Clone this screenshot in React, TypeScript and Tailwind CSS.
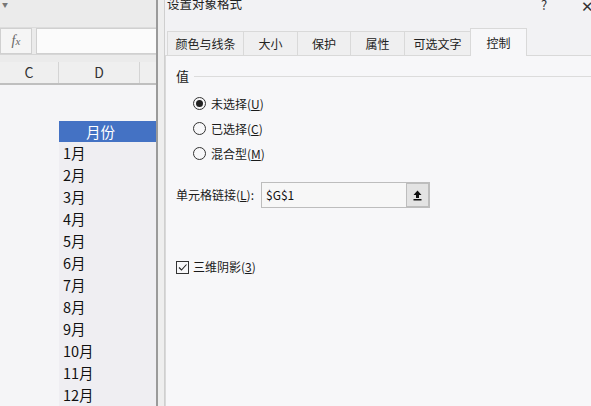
import React from "react";

const months = ["1月", "2月", "3月", "4月", "5月", "6月", "7月", "8月", "9月", "10月", "11月", "12月"];
const tabs = [
  { label: "颜色与线条", w: "w-[76px]" },
  { label: "大小", w: "w-[54px]" },
  { label: "保护", w: "w-[53px]" },
  { label: "属性", w: "w-[54px]" },
  { label: "可选文字", w: "w-[66px]" },
];

const font = { fontFamily: '"Noto Sans CJK SC", "Liberation Sans", sans-serif' };

function Radio({ checked, label, hot }: { checked?: boolean; label: string; hot: string }) {
  return (
    <div className="flex items-center h-[25px] pl-[17px]">
      <span className="w-[13px] h-[13px] rounded-full border border-[#333] flex items-center justify-center bg-[#f7f7f9]">
        {checked && <span className="w-[7px] h-[7px] rounded-full bg-[#222]" />}
      </span>
      <span className="ml-[5px] text-[12px] text-[#1a1a1a]">
        {label}(<span className="underline">{hot}</span>)
      </span>
    </div>
  );
}

function Sheet() {
  return (
    <div className="w-[156px] h-full flex flex-col bg-[#f5f5f7] shrink-0">
      <div className="h-[28px] bg-[#ebebeb] relative border-b border-[#dcdcdc]">
        <span className="absolute left-[2px] top-0 text-[6px] text-[#777]">▼</span>
      </div>
      <div className="h-[28px] flex items-center bg-[#ebebeb] border-b border-[#d6d6d6]">
        <div className="w-[32px] h-[26px] bg-[#f5f5f5] border border-[#d0d0d0] flex items-center justify-center">
          <span className="text-[14px] italic text-[#666]" style={{ fontFamily: '"Liberation Serif", serif' }}>
            f<span className="text-[11px]">x</span>
          </span>
        </div>
        <div className="ml-[4px] flex-1 h-[26px] bg-[#fbfbfb] border border-[#d0d0d0] border-r-0" />
      </div>
      <div className="h-[7px] bg-[#ebebeb]" />
      <div className="h-[23px] flex bg-[#efefef] border-b-2 border-[#bfbfbf] text-[14px] text-[#333]">
        <div className="w-[59px] border-r border-[#d4d4d4] flex items-center justify-center">C</div>
        <div className="w-[81px] border-r border-[#d4d4d4] flex items-center justify-center">D</div>
        <div className="flex-1" />
      </div>
      <div className="flex-1 flex">
        <div className="w-[59px]" />
        <div className="flex-1 flex flex-col pt-[36px]">
          <div className="h-[21px] bg-[#4472c4] text-white text-[14.5px] flex items-center justify-center pr-[14px]">月份</div>
          <div className="flex-1 bg-[#efeef2] flex flex-col">
            {months.map((m) => (
              <div key={m} className="h-[22px] flex items-center pl-[4px] text-[14.5px] text-[#111]">
                {m}
              </div>
            ))}
          </div>
        </div>
      </div>
    </div>
  );
}

function Dialog() {
  return (
    <div className="flex-1 h-full flex bg-[#f2f2f4]">
      <div className="w-[2px] bg-[#9a9a9a]" />
      <div className="w-[7px] bg-[#eeeeee] border-r border-[#cfcfcf]" />
      <div className="flex-1 flex flex-col">
        <div className="h-[28px] relative">
          <span className="absolute left-[2px] top-[-5px] text-[12.5px] text-[#222]">设置对象格式</span>
          <span className="absolute left-[376px] top-[-5px] text-[13px] text-[#333]">?</span>
          <span className="absolute left-[416px] top-[-5px] text-[15px] text-[#333]">✕</span>
        </div>
        <div className="h-[27px] flex items-end pl-[2px]">
          {tabs.map((t) => (
            <div
              key={t.label}
              className={`${t.w} h-[24px] border-l border-t border-[#d9d9d9] bg-[#efeff0] flex items-center justify-center text-[12px] text-[#222]`}
            >
              {t.label}
            </div>
          ))}
          <div className="w-[57px] h-[28px] border border-b-0 border-[#d9d9d9] bg-[#f7f7f9] flex items-center justify-center text-[12px] text-[#222] relative z-10 -mb-px">
            控制
          </div>
        </div>
        <div className="flex-1 bg-[#f7f7f9] border-t border-l border-[#d9d9d9] pl-[10px] pt-[10px]">
          <div className="flex items-center h-[20px]">
            <span className="text-[13px] text-[#1a1a1a]">值</span>
            <div className="ml-[5px] flex-1 h-px bg-[#dcdcdc]" />
          </div>
          <div className="pt-[5px] flex flex-col">
            <Radio checked label="未选择" hot="U" />
            <Radio label="已选择" hot="C" />
            <Radio label="混合型" hot="M" />
          </div>
          <div className="mt-[16px] flex items-center h-[26px]">
            <span className="w-[85px] text-[12px] text-[#1a1a1a]">
              单元格链接(<span className="underline">L</span>):
            </span>
            <div className="w-[146px] h-[26px] bg-[#f7f7f7] border border-[#bdbdbd] flex items-center pl-[4px] text-[12px] text-[#111]">
              $G$1
            </div>
            <div className="w-[23px] h-[26px] bg-[#e3e3e3] border-2 border-[#bdbdbd] border-l-0 flex items-center justify-center">
              <svg width="9" height="11" viewBox="0 0 9 11">
                <path d="M4.5 0.5 L8.5 5 L6 5 L6 8 L3 8 L3 5 L0.5 5 Z" fill="#111" />
                <rect x="0.5" y="9" width="8" height="1.5" fill="#111" />
              </svg>
            </div>
          </div>
          <div className="mt-[50px] flex items-center">
            <span className="w-[13px] h-[13px] border border-[#333] flex items-center justify-center bg-[#f7f7f9]">
              <svg width="11" height="11" viewBox="0 0 11 11">
                <path d="M2 5.5 L4.5 8 L9.5 2.5" stroke="#222" strokeWidth="1.1" fill="none" />
              </svg>
            </span>
            <span className="ml-[4px] text-[12px] text-[#1a1a1a]">
              三维阴影(<span className="underline">3</span>)
            </span>
          </div>
        </div>
      </div>
    </div>
  );
}

export default function App() {
  return (
    <div className="w-[591px] h-[406px] flex overflow-hidden" style={font}>
      <Sheet />
      <Dialog />
    </div>
  );
}
